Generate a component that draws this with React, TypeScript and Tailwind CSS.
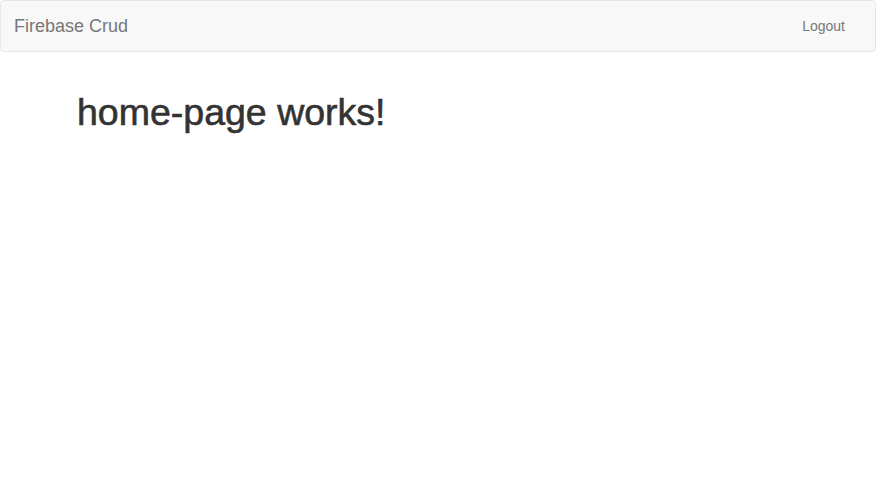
import React from 'react';

export default function App() {
  return (
    <div className="min-h-[490px] bg-white text-[#333] font-['Liberation_Sans',Arial,sans-serif]">
      <nav className="h-[52px] bg-[#f8f8f8] border border-[#e7e7e7] rounded-[4px] flex items-center justify-between">
        <a className="h-[50px] pl-[13px] pr-[15px] flex items-center text-[18px] text-[#777] cursor-pointer">Firebase Crud</a>
        <a className="h-[50px] px-[15px] mr-[15px] flex items-center text-[14px] text-[#777] cursor-pointer">Logout</a>
      </nav>
      <div className="w-[750px] mx-auto px-[15px] pt-[40px]">
        <h1 className="text-[37.5px] leading-[40px] font-normal text-[#333] -ml-[1px] [-webkit-text-stroke:0.6px_#333]">home-page works!</h1>
      </div>
    </div>
  );
}
